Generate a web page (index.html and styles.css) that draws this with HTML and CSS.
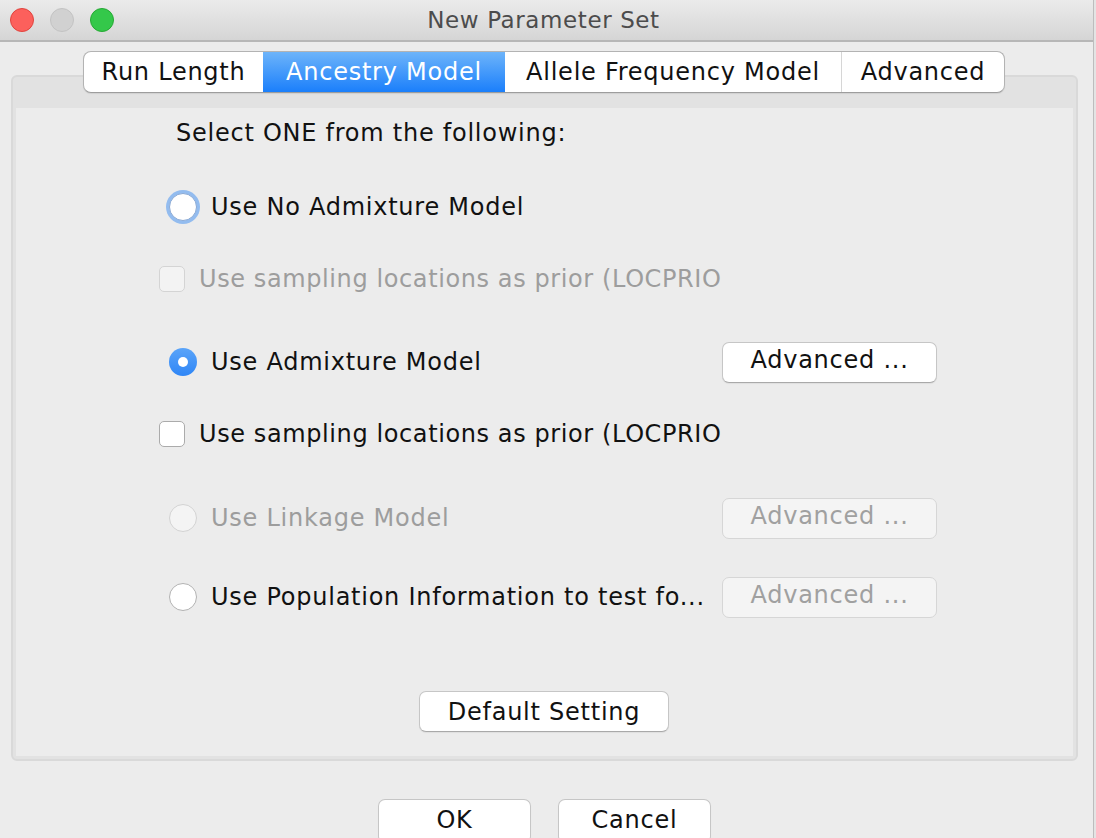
FILE: index.html
```html
<!DOCTYPE html>
<html>
<head>
<meta charset="utf-8">
<title>New Parameter Set</title>
<link rel="stylesheet" href="styles.css">
</head>
<body>
<div class="window">
  <div class="titlebar">
    <div class="lights">
      <span class="light red"></span>
      <span class="light gray"></span>
      <span class="light green"></span>
    </div>
    <div class="title">New Parameter Set</div>
  </div>

  <div class="tabs">
    <div class="tab t-run">Run Length</div>
    <div class="tab t-anc selected">Ancestry Model</div>
    <div class="tab t-allele">Allele Frequency Model</div>
    <div class="tab t-adv">Advanced</div>
  </div>

  <div class="panel">
    <div class="panel-body">
      <div class="rows">
        <div class="row r1"><span class="intro">Select ONE from the following:</span></div>
        <div class="row r2">
          <label class="opt"><span class="radio focus"></span><span class="lbl">Use No Admixture Model</span></label>
        </div>
        <div class="row r3">
          <label class="opt"><span class="check disabled"></span><span class="lbl dim tight">Use sampling locations as prior (LOCPRIO</span></label>
        </div>
        <div class="row r4">
          <label class="opt"><span class="radio on"></span><span class="lbl">Use Admixture Model</span></label>
          <div class="btn adv">Advanced ...</div>
        </div>
        <div class="row r5">
          <label class="opt"><span class="check"></span><span class="lbl tight">Use sampling locations as prior (LOCPRIO</span></label>
        </div>
        <div class="row r6">
          <label class="opt"><span class="radio disabled"></span><span class="lbl dim">Use Linkage Model</span></label>
          <div class="btn adv disabled">Advanced ...</div>
        </div>
        <div class="row r7">
          <label class="opt"><span class="radio"></span><span class="lbl">Use Population Information to test fo...</span></label>
          <div class="btn adv disabled">Advanced ...</div>
        </div>
      </div>
      <div class="default-wrap">
        <div class="btn default">Default Setting</div>
      </div>
    </div>
  </div>

  <div class="actions">
    <div class="btn action">OK</div>
    <div class="btn action">Cancel</div>
  </div>
</div>
<div class="edge"></div>
</body>
</html>
```

FILE: styles.css
```css
html, body {
  margin: 0;
  padding: 0;
}
body {
  width: 1096px;
  height: 838px;
  overflow: hidden;
  background: #ececec;
  font-family: "DejaVu Sans", "Noto Sans", sans-serif;
  font-size: 24px;
  letter-spacing: 0.75px;
  color: #111;
  display: flex;
}
.window {
  width: 1093px;
  height: 838px;
  background: #ececec;
  display: flex;
  flex-direction: column;
}
.edge {
  width: 3px;
  height: 838px;
  border-left: 1px solid #bdbdbd;
  background: #e4e4e4;
  box-sizing: border-box;
}
.titlebar {
  height: 40px;
  flex: none;
  background: linear-gradient(#ebebeb, #d5d5d5);
  border-bottom: 2px solid #b7b7b7;
  display: flex;
  align-items: center;
  position: relative;
}
.lights {
  display: flex;
  gap: 16px;
  padding-left: 10px;
}
.light {
  width: 24px;
  height: 24px;
  border-radius: 50%;
  box-sizing: border-box;
}
.light.red { background: #fc605c; border: 1px solid #e0443e; }
.light.gray { background: #d1d1d1; border: 1px solid #c3c3c3; }
.light.green { background: #34c84a; border: 1px solid #26a934; }
.title {
  position: absolute;
  left: 0;
  right: 0;
  top: 0;
  bottom: 0;
  display: flex;
  align-items: center;
  justify-content: center;
  padding-right: 6px;
  font-size: 23px;
  letter-spacing: 0.6px;
  color: #4c4c4c;
  pointer-events: none;
}

.tabs {
  flex: none;
  margin-top: 9px;
  align-self: center;
  margin-right: 5px;
  display: flex;
  height: 40px;
  border: 1px solid #b3b3b3;
  border-bottom-color: #9d9d9d;
  border-radius: 8px;
  background: #fff;
  overflow: hidden;
  position: relative;
  z-index: 2;
  box-shadow: 0 1px 1px rgba(0,0,0,0.08);
}
.tab {
  display: flex;
  align-items: center;
  justify-content: center;
  height: 40px;
  border-left: 1px solid #d6d6d6;
  box-sizing: border-box;
  color: #111;
}
.tab:first-child { border-left: none; }
.t-run { width: 179px; }
.t-anc { width: 242px; }
.t-allele { width: 336px; }
.t-adv { width: 163px; }
.tab.selected {
  background: linear-gradient(#6db4fa, #1b7ffb);
  color: #fff;
  border-left: none;
}
.tab.selected + .tab { border-left: none; }

.panel {
  flex: none;
  margin: -18px 0 0 11px;
  width: 1067px;
  height: 686px;
  box-sizing: border-box;
  border: 2px solid #d9d9d9;
  border-radius: 6px;
  background: #e2e2e2;
  padding: 31px 3px 3px 3px;
  display: flex;
}
.panel-body {
  flex: 1;
  background: #ececec;
  display: flex;
  flex-direction: column;
}
.rows {
  display: flex;
  flex-direction: column;
  padding-left: 143px;
  padding-top: 5px;
}
.row {
  height: 40px;
  display: flex;
  align-items: center;
}
.r2 { margin-top: 34px; }
.r3 { margin-top: 32px; }
.r4 { margin-top: 43px; }
.r5 { margin-top: 32px; }
.r6 { margin-top: 44px; }
.r7 { margin-top: 39px; }

.intro {
  margin-left: 17px;
}
.opt {
  display: flex;
  align-items: center;
  width: 563px;
  flex: none;
  white-space: nowrap;
}
.lbl { color: #111; }
.lbl.dim { color: #9d9d9d; }
.lbl.tight { letter-spacing: 0.6px; }

.radio {
  width: 28px;
  height: 28px;
  margin-left: 10px;
  margin-right: 14px;
  border-radius: 50%;
  box-sizing: border-box;
  border: 1px solid #b2b2b2;
  background: #fff;
  flex: none;
  position: relative;
}
.radio.focus {
  border-color: #8aa9d4;
  box-shadow: 0 0 0 3px #93bcef;
}
.radio.on {
  border: none;
  background: linear-gradient(#5aa4f9, #2f86f6);
}
.radio.on::after {
  content: "";
  position: absolute;
  left: 9px;
  top: 9px;
  width: 10px;
  height: 10px;
  border-radius: 50%;
  background: #fff;
}
.radio.disabled {
  background: #f4f4f4;
  border-color: #d3d3d3;
}
.check {
  width: 26px;
  height: 26px;
  margin-right: 14px;
  box-sizing: border-box;
  border: 1px solid #ababab;
  border-radius: 5px;
  background: #fff;
  flex: none;
}
.check.disabled {
  background: #f3f3f3;
  border-color: #d4d4d4;
}

.btn {
  display: flex;
  align-items: center;
  justify-content: center;
  box-sizing: border-box;
  background: #fff;
  border: 1px solid #c6c6c6;
  border-bottom-color: #a9a9a9;
  border-radius: 7px;
  color: #111;
  box-shadow: 0 1px 1px rgba(0,0,0,0.06);
  white-space: nowrap;
}
.btn.adv {
  width: 215px;
  height: 41px;
  padding-bottom: 4px;
}
.btn.disabled {
  background: #f4f4f4;
  color: #a0a0a0;
  border-color: #d6d6d6;
  box-shadow: none;
}
.default-wrap {
  display: flex;
  justify-content: center;
  margin-top: 74px;
}
.btn.default {
  width: 250px;
  height: 41px;
  margin-right: 1px;
}
.actions {
  display: flex;
  justify-content: center;
  gap: 27px;
  margin-top: 38px;
  padding-right: 4px;
}
.btn.action {
  width: 153px;
  height: 44px;
  align-items: flex-start;
  padding-top: 6px;
}
```
